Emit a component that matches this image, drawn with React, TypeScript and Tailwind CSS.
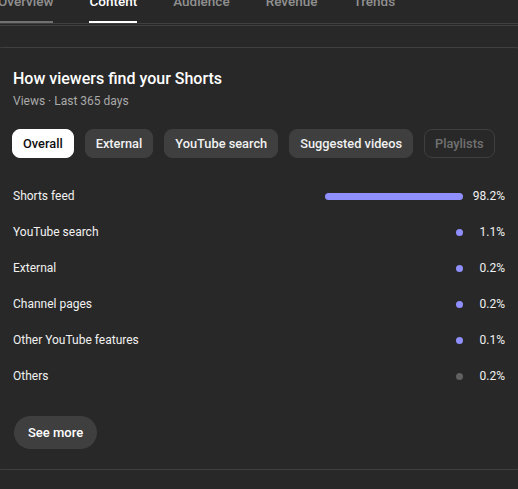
import React from 'react';

const tabs = [
  { label: 'Overview', state: 'hover' },
  { label: 'Content', state: 'active' },
  { label: 'Audience', state: '' },
  { label: 'Revenue', state: '' },
  { label: 'Trends', state: '' },
];

const chips = [
  { label: 'Overall', kind: 'active' },
  { label: 'External', kind: 'normal' },
  { label: 'YouTube search', kind: 'normal' },
  { label: 'Suggested videos', kind: 'normal' },
  { label: 'Playlists', kind: 'disabled' },
];

const sources = [
  { label: 'Shorts feed', value: 98.2 },
  { label: 'YouTube search', value: 1.1 },
  { label: 'External', value: 0.2 },
  { label: 'Channel pages', value: 0.2 },
  { label: 'Other YouTube features', value: 0.1 },
  { label: 'Others', value: 0.2, muted: true },
];

const chipClass: Record<string, string> = {
  active: 'bg-white text-[#0f0f0f] border-white',
  normal: 'bg-[#3f3f3f] text-[#f1f1f1] border-[#3f3f3f]',
  disabled: 'bg-transparent text-[#717171] border-[#3f3f3f]',
};

const App: React.FC = () => {
  return (
    <div className="min-h-[489px] w-[518px] overflow-hidden bg-[#282828] font-['Roboto',sans-serif] text-[#f1f1f1]">
      <div className="-mt-[24px] -ml-[2px] flex h-[48px] gap-[36px] border-b border-[#3f3f3f]">
        {tabs.map((t) => (
          <div key={t.label} className="relative flex items-center pt-[4px]">
            <span
              className={`text-[13.5px] font-medium ${
                t.state === 'active' ? 'text-white' : 'text-[#909090]'
              }`}
            >
              {t.label}
            </span>
            {t.state === 'active' && <div className="absolute bottom-0 left-0 right-0 h-[2px] bg-white" />}
            {t.state === 'hover' && <div className="absolute bottom-0 left-0 right-0 h-[2px] bg-[#717171]" />}
          </div>
        ))}
      </div>
      <div className="mt-[1px] border-t border-[#3f3f3f]" />

      <div className="-ml-[10px] mt-[21px] w-[538px] rounded-xl border border-[#3f3f3f] px-[22px] pt-[20px] pb-[20px]">
        <h2 className="text-[16px] leading-[22px] font-medium text-white">How viewers find your Shorts</h2>
        <p className="mt-[3px] text-[12px] leading-[16px] text-[#aaaaaa]">Views · Last 365 days</p>

        <div className="mt-[20px] -ml-[1px] flex gap-[11px]">
          {chips.map((c) => (
            <button
              key={c.label}
              className={`h-[29px] rounded-lg border px-[10px] text-[12.8px] font-medium ${chipClass[c.kind]}`}
            >
              {c.label}
            </button>
          ))}
        </div>

        <div className="mt-[20px]">
          {sources.map((s) => (
            <div key={s.label} className="flex h-[36px] items-center text-[12px]">
              <span className="flex-1">{s.label}</span>
              <div className="flex w-[141px] justify-end">
                <div
                  className={`h-[7px] min-w-[7px] rounded-full ${s.muted ? 'bg-[#606060]' : 'bg-[#8f8fff]'}`}
                  style={{ width: `${s.value}%` }}
                />
              </div>
              <span className="w-[42px] text-right">{s.value}%</span>
            </div>
          ))}
        </div>

        <button className="mt-[22px] ml-[1px] h-[33px] rounded-full bg-[#3f3f3f] px-[14px] text-[13px] font-medium text-white">
          See more
        </button>
      </div>
    </div>
  );
};

export default App;
